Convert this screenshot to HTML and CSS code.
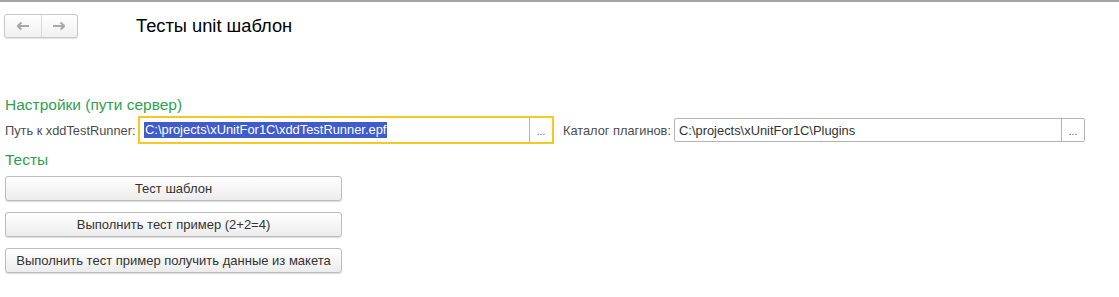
FILE: index.html
```html
<!DOCTYPE html>
<html>
<head>
<meta charset="utf-8">
<link rel="stylesheet" href="styles.css">
</head>
<body>
<div class="page">
  <header class="top">
    <div class="nav">
      <span class="nav-btn"><svg width="14" height="10" viewBox="0 0 14 10"><path d="M2 5h11M1.5 5l4-3.5M1.5 5l4 3.5" stroke="#a8a8a8" stroke-width="2" fill="none"/></svg></span>
      <span class="nav-btn"><svg width="14" height="10" viewBox="0 0 14 10"><path d="M1 5h11M12.5 5l-4-3.5M12.5 5l-4 3.5" stroke="#a8a8a8" stroke-width="2" fill="none"/></svg></span>
    </div>
    <h1 class="title">Тесты unit шаблон</h1>
  </header>

  <h2 class="group">Настройки (пути сервер)</h2>
  <div class="row">
    <label class="lbl">Путь к xddTestRunner:</label>
    <div class="field field-focus">
      <span class="value"><span class="sel">C:\projects\xUnitFor1C\xddTestRunner.epf</span></span>
      <span class="dots">...</span>
    </div>
    <label class="lbl lbl2">Каталог плагинов:</label>
    <div class="field field-plain">
      <span class="value">C:\projects\xUnitFor1C\Plugins</span>
      <span class="dots">...</span>
    </div>
  </div>

  <h2 class="group group2">Тесты</h2>
  <div class="buttons">
    <button class="btn">Тест шаблон</button>
    <button class="btn">Выполнить тест пример (2+2=4)</button>
    <button class="btn">Выполнить тест пример получить данные из макета</button>
  </div>
</div>
</body>
</html>
```
FILE: styles.css
```css
html, body { margin: 0; padding: 0; background: #fff; }
body { font-family: Arial, "Liberation Sans", sans-serif; color: #333; }
.page { border-top: 2px solid #a5a5a5; width: 1119px; height: 295px; box-sizing: border-box; }
.top { display: flex; align-items: center; padding: 11px 0 0 4px; height: 26px; }
.nav { display: flex; width: 74px; height: 24px; box-sizing: border-box; border: 1px solid #c8c8c8; border-radius: 3px; background: linear-gradient(#fff, #f0f0f0); box-shadow: 0 1px 1px rgba(0,0,0,0.12); }
.nav-btn { flex: 1; display: flex; align-items: center; justify-content: center; }
.nav-btn + .nav-btn { border-left: 1px solid #d8d8d8; }
.title { margin: 0 0 0 58px; font-size: 18.3px; font-weight: normal; color: #000; }
.group { margin: 57px 0 0 5px; font-size: 15.5px; font-weight: normal; color: #2ea14e; line-height: 18px; }
.group2 { margin-top: 7px; }
.row { display: flex; align-items: center; margin: 2px 0 0 5px; height: 28px; }
.lbl { font-size: 12.8px; color: #4d4d4d; width: 129px; white-space: nowrap; }
.lbl2 { margin-left: 9px; width: 105px; }
.field { display: flex; box-sizing: border-box; align-items: stretch; font-size: 12.9px; }
.field-focus { width: 416px; height: 28px; margin-left: 4px; border: 2px solid #f7c824; }
.field-plain { width: 411px; height: 24px; margin-left: 6px; border: 1px solid #b4b4b4; border-radius: 2px; }
.value { flex: 1; display: flex; align-items: center; padding-left: 4px; color: #333; white-space: nowrap; overflow: hidden; }
.sel { background: #3f5bcc; color: #fff; line-height: 16px; padding: 0 1px; }
.dots { width: 23px; border-left: 1px solid #b4b4b4; display: flex; align-items: center; justify-content: center; color: #555; font-size: 10px; padding-top: 2px; box-sizing: border-box; }
.buttons { display: flex; flex-direction: column; gap: 11px; margin: 7px 0 0 5px; }
.btn { width: 337px; height: 25px; font-family: Arial, "Liberation Sans", sans-serif; font-size: 13px; color: #333; border: 1px solid #bdbdbd; border-radius: 3px; background: linear-gradient(#fff, #ececec); box-shadow: 0 1px 1px rgba(0,0,0,0.15); padding: 0; }
```
